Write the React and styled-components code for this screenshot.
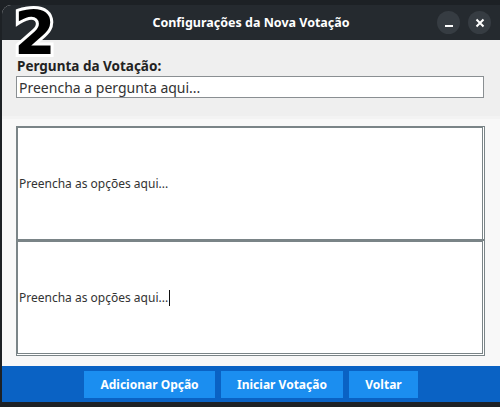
import React from "react";
import styled, { createGlobalStyle } from "styled-components";

const Global = createGlobalStyle`
  html, body { margin: 0; padding: 0; background: #1d2125; }
  * { box-sizing: border-box; }
`;

const Screen = styled.div`
  width: 500px;
  height: 407px;
  background: #1d2125;
  padding: 5px 0 5px 2px;
  display: flex;
  flex-direction: column;
  position: relative;
  font-family: "Noto Sans", "DejaVu Sans", sans-serif;
  overflow: hidden;
`;

const Window = styled.div`
  flex: 1;
  display: flex;
  flex-direction: column;
  border-top-left-radius: 9px;
  overflow: hidden;
  background: #efefef;
`;

const TitleBar = styled.div`
  height: 35px;
  background: #252a2f;
  display: flex;
  align-items: center;
  justify-content: center;
  position: relative;
  color: #ffffff;
  font-weight: 700;
  font-size: 12.5px;
`;

const Controls = styled.div`
  position: absolute;
  right: 9px;
  top: 6px;
  display: flex;
  gap: 8px;
`;

const CircleBtn = styled.div`
  width: 23px;
  height: 23px;
  border-radius: 50%;
  background: #363c42;
  display: flex;
  align-items: center;
  justify-content: center;
`;

const Badge = styled.div`
  position: absolute;
  left: 14px;
  top: 11px;
  font-family: "DejaVu Sans", sans-serif;
  font-weight: 700;
  font-size: 60px;
  line-height: 44px;
  height: 44px;
  color: #000;
  -webkit-text-stroke: 6px #ffffff;
  paint-order: stroke fill;
  z-index: 5;
`;

const QuestionArea = styled.div`
  padding: 17px 16px 18px 14px;
  display: flex;
  flex-direction: column;
  gap: 1px;
  border-bottom: 3px solid #f3f3f3;
`;

const Label = styled.div`
  font-weight: 700;
  font-size: 13.5px;
  color: #222;
  line-height: 18px;
  padding-left: 1px;
`;

const TextInput = styled.div`
  height: 22px;
  background: #fff;
  border: 1px solid #8a8f92;
  font-size: 14px;
  color: #333;
  display: flex;
  align-items: center;
  padding-left: 2px;
`;

const OptionsPanel = styled.div`
  flex: 1;
  background: #f8f8f8;
  padding: 7px 15px 9px 14px;
  display: flex;
  flex-direction: column;
`;

const OptionBox = styled.div`
  height: ${(p) => p.$h}px;
  background: #fff;
  border-top: 2px solid #7a8487;
  border-left: 2px solid #7a8487;
  border-right: 3px double #7a8487;
  border-bottom: ${(p) => (p.$last ? "3px double #7a8487" : "1px solid #7a8487")};
  display: flex;
  align-items: center;
  padding-left: 1px;
  font-size: 12px;
  color: #333;
`;

const Caret = styled.span`
  display: inline-block;
  width: 1px;
  height: 16px;
  background: #111;
  margin-left: 1px;
  vertical-align: middle;
`;

const Footer = styled.div`
  height: 36px;
  background: #0a62c4;
  display: flex;
  align-items: center;
  justify-content: center;
  gap: 6px;
`;

const Button = styled.div`
  height: 27px;
  width: ${(p) => p.$w}px;
  background: #1b8ef0;
  color: #fff;
  font-weight: 700;
  font-size: 12px;
  display: flex;
  align-items: center;
  justify-content: center;
`;

export default function App() {
  return (
    <>
      <Global />
      <Screen>
        <Badge>2</Badge>
        <Window>
          <TitleBar>
            Configurações da Nova Votação
            <Controls>
              <CircleBtn>
                <svg width="10" height="10" viewBox="0 0 10 10">
                  <rect x="1" y="7" width="8" height="2" fill="#fff" />
                </svg>
              </CircleBtn>
              <CircleBtn>
                <svg width="10" height="10" viewBox="0 0 10 10">
                  <path d="M1.5 1.5 L8.5 8.5 M8.5 1.5 L1.5 8.5" stroke="#fff" strokeWidth="2" />
                </svg>
              </CircleBtn>
            </Controls>
          </TitleBar>
          <QuestionArea>
            <Label>Pergunta da Votação:</Label>
            <TextInput>Preencha a pergunta aqui...</TextInput>
          </QuestionArea>
          <OptionsPanel>
            <OptionBox $h={114}>Preencha as opções aqui...</OptionBox>
            <OptionBox $h={116} $last>
              Preencha as opções aqui...<Caret />
            </OptionBox>
          </OptionsPanel>
          <Footer>
            <Button $w={131}>Adicionar Opção</Button>
            <Button $w={122}>Iniciar Votação</Button>
            <Button $w={69}>Voltar</Button>
          </Footer>
        </Window>
      </Screen>
    </>
  );
}
